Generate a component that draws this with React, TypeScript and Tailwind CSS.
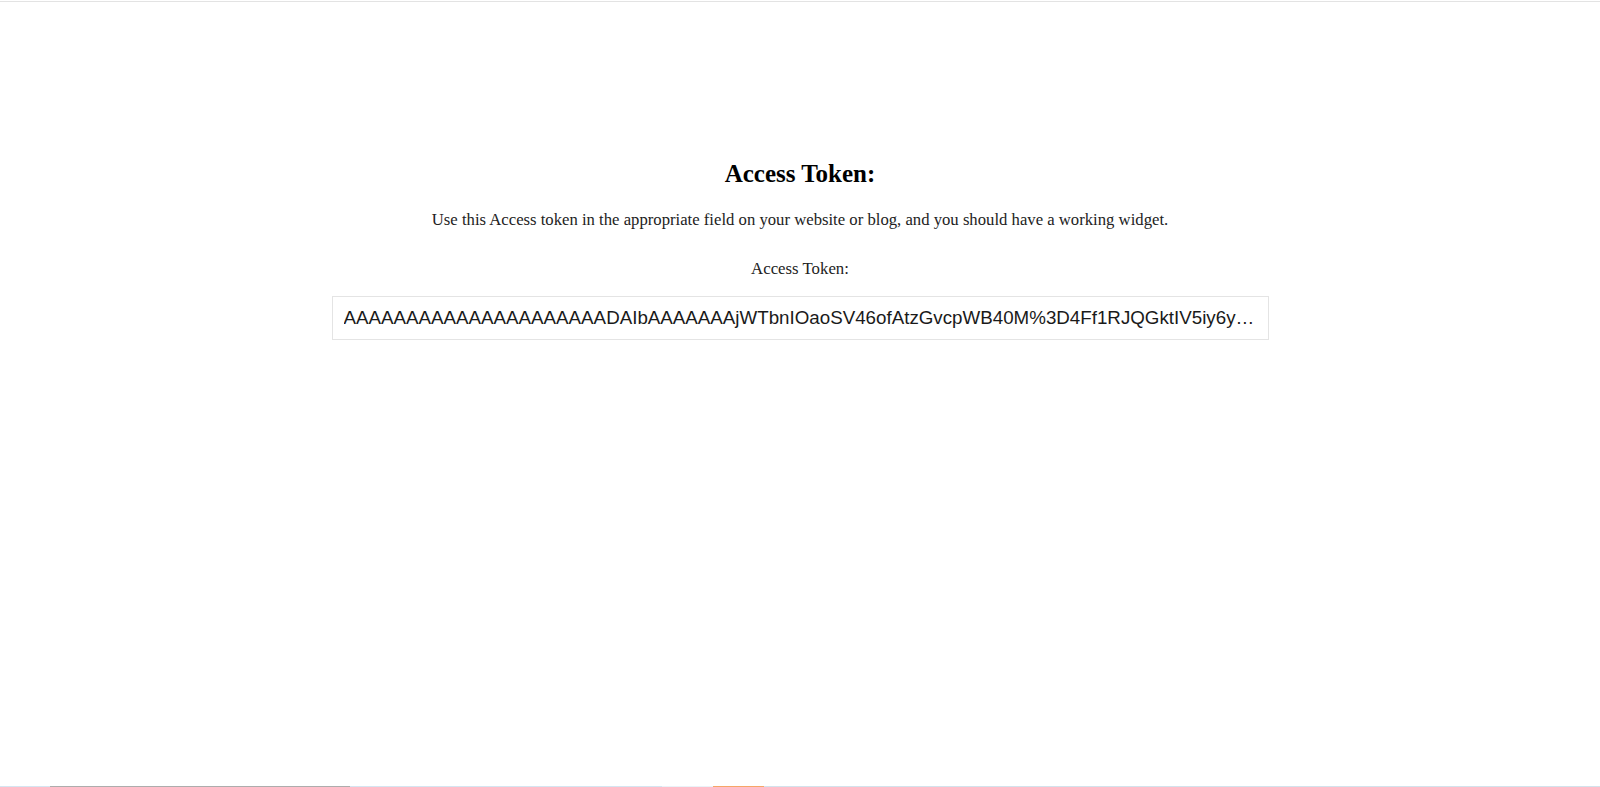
const TOKEN =
  "AAAAAAAAAAAAAAAAAAAAADAIbAAAAAAAjWTbnIOaoSV46ofAtzGvcpWB40M%3D4Ff1RJQGktIV5iy6yHq8rTnWz0pLcE2xkYbVgUu7mFd3sNa"

export default function App() {
  return (
    <div className="flex h-screen flex-col bg-white font-['Liberation_Serif',serif] text-[#111]">
      <div className="mt-px h-px bg-[#e3e3e3]" />

      <main className="flex flex-col items-center pt-[157px] text-center">
        <h2 className="text-[25px] font-bold leading-[29px] text-black">Access Token:</h2>
        <p className="mt-[22px] text-[16.7px] leading-[19px] text-[#222]">
          Use this Access token in the appropriate field on your website or blog, and you should have a working widget.
        </p>
        <label htmlFor="token" className="mt-[30px] text-[16.8px] leading-[19px] text-[#222]">
          Access Token:
        </label>
        <input
          id="token"
          readOnly
          value={TOKEN}
          className="mt-[18px] h-[44px] w-[937px] truncate border border-[#e4e4e4] bg-white pl-[11px] pr-[12px] font-['Liberation_Sans',Arial,sans-serif] text-[18.75px] text-[#1a1a1a] outline-none"
        />
      </main>

      {/* bottom edge strip */}
      <div className="mt-auto flex h-px">
        <div className="w-[50px] bg-[#d5e5f1]" />
        <div className="w-[300px] bg-[#adadad]" />
        <div className="w-[312px] bg-[#d5e5f1]" />
        <div className="w-[51px] bg-[#eaf2f8]" />
        <div className="w-[51px] bg-[#f6a667]" />
        <div className="flex-1 bg-[#d3e2ec]" />
      </div>
    </div>
  )
}
